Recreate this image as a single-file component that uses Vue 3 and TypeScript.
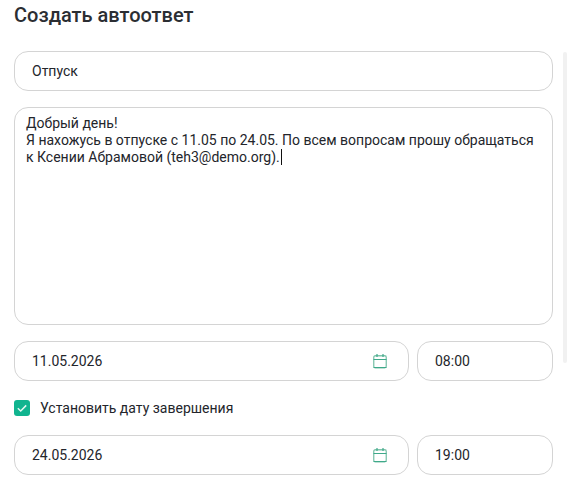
<script setup lang="ts">
const message: string[] = [
  'Добрый день!',
  'Я нахожусь в отпуске с 11.05 по 24.05. По всем вопросам прошу обращаться',
  'к Ксении Абрамовой (teh3@demo.org).',
]
const rows = [
  { date: '11.05.2026', time: '08:00' },
  { date: '24.05.2026', time: '19:00' },
]
</script>

<template>
  <div class="panel">
    <h1 class="title">Создать автоответ</h1>
    <div class="field name">Отпуск</div>
    <div class="area">
      <div v-for="(line, i) in message" :key="i" class="line">{{ line }}<span v-if="i === message.length - 1" class="caret"></span></div>
    </div>
    <div class="row">
      <div class="field date">
        <span>{{ rows[0].date }}</span>
        <svg class="cal" width="16" height="16" viewBox="0 0 16 16" fill="none">
          <rect x="1.75" y="2.75" width="12.5" height="12" rx="1.5" stroke="#7fc4ac" stroke-width="1.3" />
          <path d="M1.5 6.5H14.5M1.5 14.5H14.5" stroke="#3fa98a" stroke-width="1.2" />
          <path d="M5 1V4M11 1V4" stroke="#3fa98a" stroke-width="1.2" />
        </svg>
      </div>
      <div class="field time">{{ rows[0].time }}</div>
    </div>
    <label class="check">
      <span class="box">
        <svg width="16" height="16" viewBox="0 0 16 16" fill="none">
          <path d="M3.8 8.3L6.7 11L12.2 5.4" stroke="#e4f7f1" stroke-width="1.5" />
        </svg>
      </span>
      <span>Установить дату завершения</span>
    </label>
    <div class="row">
      <div class="field date">
        <span>{{ rows[1].date }}</span>
        <svg class="cal" width="16" height="16" viewBox="0 0 16 16" fill="none">
          <rect x="1.75" y="2.75" width="12.5" height="12" rx="1.5" stroke="#7fc4ac" stroke-width="1.3" />
          <path d="M1.5 6.5H14.5M1.5 14.5H14.5" stroke="#3fa98a" stroke-width="1.2" />
          <path d="M5 1V4M11 1V4" stroke="#3fa98a" stroke-width="1.2" />
        </svg>
      </div>
      <div class="field time">{{ rows[1].time }}</div>
    </div>
    <div class="scroll"></div>
  </div>
</template>

<style>
html, body { margin: 0; background: #fff; overflow: hidden; }
</style>

<style scoped>
.panel {
  position: relative;
  box-sizing: border-box;
  width: 573px;
  height: 485px;
  padding: 0 20px 0 14px;
  font-family: Roboto, "Noto Sans", sans-serif;
  font-size: 14px;
  color: #23252b;
  overflow: hidden;
}
.title {
  margin: 0;
  height: 51px;
  padding-top: 2px;
  box-sizing: border-box;
  font-size: 20px;
  line-height: 26px;
  font-weight: 500;
  color: #2b2e33;
}
.field {
  box-sizing: border-box;
  height: 40px;
  border: 1px solid #d4d4d4;
  border-radius: 14px;
  padding: 0 16px 0 17px;
  display: flex;
  align-items: center;
  justify-content: space-between;
  line-height: 20px;
}
.name { width: 539px; }
.area {
  box-sizing: border-box;
  width: 539px;
  height: 218px;
  margin-top: 16px;
  padding: 7px 11px;
  border: 1px solid #d4d4d4;
  border-radius: 14px;
  line-height: 17px;
}
.caret {
  display: inline-block;
  width: 1px;
  height: 16px;
  margin-left: 1px;
  background: #111;
  vertical-align: -3px;
}
.row {
  display: flex;
  gap: 8px;
  width: 539px;
  margin-top: 16px;
}
.date { width: 395px; padding-right: 20px; }
.time { width: 136px; }
.cal { display: block; }
.check {
  display: flex;
  align-items: center;
  gap: 10px;
  height: 16px;
  margin-top: 19px;
  margin-bottom: 19px;
  line-height: 16px;
}
.box {
  width: 16px;
  height: 16px;
  border-radius: 3px;
  background: #10b48f;
  display: block;
}
.box svg { display: block; }
.scroll {
  position: absolute;
  left: 563px;
  top: 52px;
  width: 4px;
  height: 311px;
  border-radius: 2px;
  background: #f1f1f1;
}
</style>
